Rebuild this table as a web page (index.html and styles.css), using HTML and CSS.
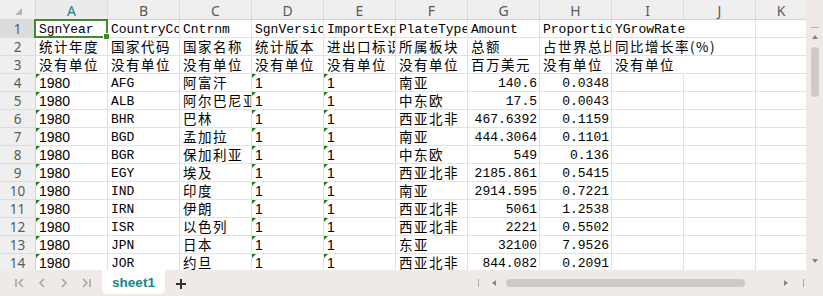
FILE: index.html
```html
<!DOCTYPE html>
<html>
<head>
<meta charset="utf-8">
<link rel="stylesheet" href="styles.css">
</head>
<body>
<div class="app">
  <div class="main">
    <div class="sheet" id="sheet">
      <div class="corner"><span class="corner-tri"></span></div>
      <div class="ch active">A</div><div class="ch">B</div><div class="ch">C</div><div class="ch">D</div><div class="ch">E</div><div class="ch">F</div><div class="ch">G</div><div class="ch">H</div><div class="ch">I</div><div class="ch">J</div><div class="ch last">K</div>

      <div class="rh active">1</div>
      <div class="c sel">SgnYear</div><div class="c">CountryCode</div><div class="c">Cntrnm</div><div class="c">SgnVersion</div><div class="c">ImportExport</div><div class="c">PlateType</div><div class="c">Amount</div><div class="c">Proportion</div><div class="c ov">YGrowRate</div><div class="c"></div><div class="c last"></div>

      <div class="rh">2</div>
      <div class="c cn">统计年度</div><div class="c cn">国家代码</div><div class="c cn">国家名称</div><div class="c cn">统计版本</div><div class="c cn">进出口标识</div><div class="c cn">所属板块</div><div class="c cn">总额</div><div class="c cn">占世界总比</div><div class="c cn ov">同比增长率(%)</div><div class="c"></div><div class="c last"></div>

      <div class="rh">3</div>
      <div class="c cn">没有单位</div><div class="c cn">没有单位</div><div class="c cn">没有单位</div><div class="c cn">没有单位</div><div class="c cn">没有单位</div><div class="c cn">没有单位</div><div class="c cn">百万美元</div><div class="c cn">没有单位</div><div class="c cn ov">没有单位</div><div class="c"></div><div class="c last"></div>

      <div class="rh">4</div>
      <div class="c t">1980</div><div class="c">AFG</div><div class="c cn">阿富汗</div><div class="c t">1</div><div class="c t">1</div><div class="c cn">南亚</div><div class="c r">140.6</div><div class="c r">0.0348</div><div class="c"></div><div class="c"></div><div class="c last"></div>

      <div class="rh">5</div>
      <div class="c t">1980</div><div class="c">ALB</div><div class="c cn">阿尔巴尼亚</div><div class="c t">1</div><div class="c t">1</div><div class="c cn">中东欧</div><div class="c r">17.5</div><div class="c r">0.0043</div><div class="c"></div><div class="c"></div><div class="c last"></div>

      <div class="rh">6</div>
      <div class="c t">1980</div><div class="c">BHR</div><div class="c cn">巴林</div><div class="c t">1</div><div class="c t">1</div><div class="c cn">西亚北非</div><div class="c r">467.6392</div><div class="c r">0.1159</div><div class="c"></div><div class="c"></div><div class="c last"></div>

      <div class="rh">7</div>
      <div class="c t">1980</div><div class="c">BGD</div><div class="c cn">孟加拉</div><div class="c t">1</div><div class="c t">1</div><div class="c cn">南亚</div><div class="c r">444.3064</div><div class="c r">0.1101</div><div class="c"></div><div class="c"></div><div class="c last"></div>

      <div class="rh">8</div>
      <div class="c t">1980</div><div class="c">BGR</div><div class="c cn">保加利亚</div><div class="c t">1</div><div class="c t">1</div><div class="c cn">中东欧</div><div class="c r">549</div><div class="c r">0.136</div><div class="c"></div><div class="c"></div><div class="c last"></div>

      <div class="rh">9</div>
      <div class="c t">1980</div><div class="c">EGY</div><div class="c cn">埃及</div><div class="c t">1</div><div class="c t">1</div><div class="c cn">西亚北非</div><div class="c r">2185.861</div><div class="c r">0.5415</div><div class="c"></div><div class="c"></div><div class="c last"></div>

      <div class="rh">10</div>
      <div class="c t">1980</div><div class="c">IND</div><div class="c cn">印度</div><div class="c t">1</div><div class="c t">1</div><div class="c cn">南亚</div><div class="c r">2914.595</div><div class="c r">0.7221</div><div class="c"></div><div class="c"></div><div class="c last"></div>

      <div class="rh">11</div>
      <div class="c t">1980</div><div class="c">IRN</div><div class="c cn">伊朗</div><div class="c t">1</div><div class="c t">1</div><div class="c cn">西亚北非</div><div class="c r">5061</div><div class="c r">1.2538</div><div class="c"></div><div class="c"></div><div class="c last"></div>

      <div class="rh">12</div>
      <div class="c t">1980</div><div class="c">ISR</div><div class="c cn">以色列</div><div class="c t">1</div><div class="c t">1</div><div class="c cn">西亚北非</div><div class="c r">2221</div><div class="c r">0.5502</div><div class="c"></div><div class="c"></div><div class="c last"></div>

      <div class="rh">13</div>
      <div class="c t">1980</div><div class="c">JPN</div><div class="c cn">日本</div><div class="c t">1</div><div class="c t">1</div><div class="c cn">东亚</div><div class="c r">32100</div><div class="c r">7.9526</div><div class="c"></div><div class="c"></div><div class="c last"></div>

      <div class="rh">14</div>
      <div class="c t">1980</div><div class="c">JOR</div><div class="c cn">约旦</div><div class="c t">1</div><div class="c t">1</div><div class="c cn">西亚北非</div><div class="c r">844.082</div><div class="c r">0.2091</div><div class="c"></div><div class="c"></div><div class="c last"></div>
    </div>
    <div class="vscroll">
      <div class="vtop"><span class="dash-h"></span></div>
      <svg class="varrow" width="8" height="6" viewBox="0 0 8 6"><path d="M1 5 L4 1 L7 5 Z" fill="#8a8686"/></svg>
      <div class="vthumb"></div>
      <div class="vspace"></div>
      <svg class="varrow" width="8" height="6" viewBox="0 0 8 6"><path d="M1 1 L4 5 L7 1 Z" fill="#8a8686"/></svg>
    </div>
  </div>
  <div class="bottom">
    <div class="nav">
      <svg width="12" height="12" viewBox="0 0 12 12"><path d="M2 2 V10 M9 2 L5 6 L9 10" stroke="#a9a5a4" stroke-width="1.6" fill="none"/></svg>
      <svg width="12" height="12" viewBox="0 0 12 12"><path d="M8 2 L4 6 L8 10" stroke="#a9a5a4" stroke-width="1.6" fill="none"/></svg>
      <svg width="12" height="12" viewBox="0 0 12 12"><path d="M4 2 L8 6 L4 10" stroke="#a9a5a4" stroke-width="1.6" fill="none"/></svg>
      <svg width="12" height="12" viewBox="0 0 12 12"><path d="M3 2 L7 6 L3 10 M10 2 V10" stroke="#a9a5a4" stroke-width="1.6" fill="none"/></svg>
    </div>
    <div class="tab">sheet1</div>
    <svg class="plus" width="12" height="12" viewBox="0 0 12 12"><path d="M6 1 V11 M1 6 H11" stroke="#333" stroke-width="2"/></svg>
    <div class="hscroll">
      <span class="dash-v"></span>
      <svg width="6" height="8" viewBox="0 0 6 8"><path d="M5 1 L1 4 L5 7 Z" fill="#8a8686"/></svg>
      <div class="hthumb"></div>
      <svg width="6" height="8" viewBox="0 0 6 8"><path d="M1 1 L5 4 L1 7 Z" fill="#8a8686"/></svg>
      <span class="dash-v"></span>
    </div>
  </div>
</div>
</body>
</html>
```

FILE: styles.css
```css
* { box-sizing: border-box; }
html, body { margin: 0; padding: 0; }
body { width: 823px; height: 296px; overflow: hidden; background: #efe9e7; }

.app { display: flex; flex-direction: column; width: 823px; height: 296px; }

.main { display: flex; height: 270px; overflow: hidden; }

.sheet {
  width: 806px;
  height: 270px;
  overflow: hidden;
  display: grid;
  grid-template-columns: 36px repeat(10, 72px) 50px;
  grid-template-rows: 20px repeat(14, 18px);
  background: #fff;
  font-family: "Liberation Mono", monospace;
  font-size: 13px;
  color: #000;
}

.corner {
  background: #efefef;
  border-right: 1px solid #d9d9d9;
  border-bottom: 1px solid #d9d9d9;
  position: relative;
}
.corner-tri {
  position: absolute;
  right: 13px;
  bottom: 4px;
  width: 0; height: 0;
  border-left: 7px solid transparent;
  border-bottom: 7px solid #b3b3b3;
}

.ch {
  background: #efefef;
  border-right: 1px solid #dcdcdc;
  border-bottom: 1px solid #d5d5d5;
  font-family: "Noto Sans", "Liberation Sans", sans-serif;
  font-size: 14px;
  color: #5a5a5a;
  display: flex;
  align-items: center;
  justify-content: center;
  padding-top: 1px;
}
.ch.active { color: #17877b; background: #ebebeb; }
.ch.last { border-right: none; }

.rh {
  background: #efefef;
  border-right: 1px solid #d5d5d5;
  border-bottom: 1px solid #dcdcdc;
  font-family: "Noto Sans", "Liberation Sans", sans-serif;
  font-size: 13.5px;
  color: #5a5a5a;
  display: flex;
  align-items: center;
  justify-content: center;
}
.rh.active { background: #dcdcdc; }

.c {
  position: relative;
  border-right: 1px solid #e2e2e2;
  border-bottom: 1px solid #e2e2e2;
  padding: 0 2px 0 3px;
  line-height: 19px;
  white-space: nowrap;
  overflow: hidden;
}
.c.last { border-right: none; }
.c.ov { overflow: visible; border-right-color: transparent; z-index: 1; }
.c.cn { font-family: "Noto Sans CJK SC", sans-serif; font-size: 13.5px; letter-spacing: 1.5px; line-height: 17px; }
.c.r { text-align: right; }
.c.t { font-family: "Liberation Sans", "Noto Sans", sans-serif; font-size: 14px; line-height: 19px; padding-left: 3px; }
.c.t::before {
  content: "";
  position: absolute;
  left: 0; top: 0;
  width: 0; height: 0;
  border-top: 4px solid #1d7a1d;
  border-right: 4px solid transparent;
}

.c.sel { overflow: visible; z-index: 2; }
.c.sel::after {
  content: "";
  position: absolute;
  left: -2px; top: -1px; right: -1px; bottom: -1px;
  border: 2px solid #3f8a2f;
  pointer-events: none;
}
.c.sel::before {
  content: "";
  position: absolute;
  right: -3px; bottom: -3px;
  width: 5px; height: 5px;
  background: #3f8a2f;
  border: 1px solid #fff;
  z-index: 3;
}

.vscroll {
  width: 17px;
  height: 270px;
  background: #efe9e7;
  display: flex;
  flex-direction: column;
  align-items: center;
  padding-top: 20px;
}
.vtop { height: 14px; display: flex; align-items: center; justify-content: center; width: 100%; }
.dash-h { display: block; width: 8px; height: 1px; background: #b0abaa; }
.varrow { display: block; margin: 0 0 6px; }
.vthumb { width: 8px; height: 50px; border-radius: 4px; background: #cfcac8; margin-top: 1px; }
.vspace { flex: 1; }

.bottom {
  height: 26px;
  display: flex;
  align-items: flex-start;
  background: #efe9e7;
}
.nav {
  display: flex;
  gap: 10px;
  padding-left: 14px;
  width: 102px;
  height: 26px;
  align-items: center;
}
.nav svg { display: block; }
.tab {
  width: 63px;
  height: 24px;
  background: #fff;
  border-radius: 0 0 5px 5px;
  font-family: "Liberation Sans", "Noto Sans", sans-serif;
  font-weight: bold;
  font-size: 13.5px;
  color: #12878a;
  display: flex;
  align-items: center;
  justify-content: center;
}
.plus { margin: 8px 0 0 10px; display: block; }
.hscroll {
  margin-left: auto;
  width: 345px;
  height: 26px;
  display: flex;
  align-items: center;
  gap: 0;
  padding-right: 19px;
}
.dash-v { display: block; width: 1px; height: 8px; background: #b0abaa; }
.hscroll svg { display: block; margin: 0 9px 0 12px; }
.hscroll .hthumb { height: 8px; flex: 1; border-radius: 4px; background: #cfcac8; }
.hscroll svg:last-of-type { margin: 0 14px 0 38px; }
```
